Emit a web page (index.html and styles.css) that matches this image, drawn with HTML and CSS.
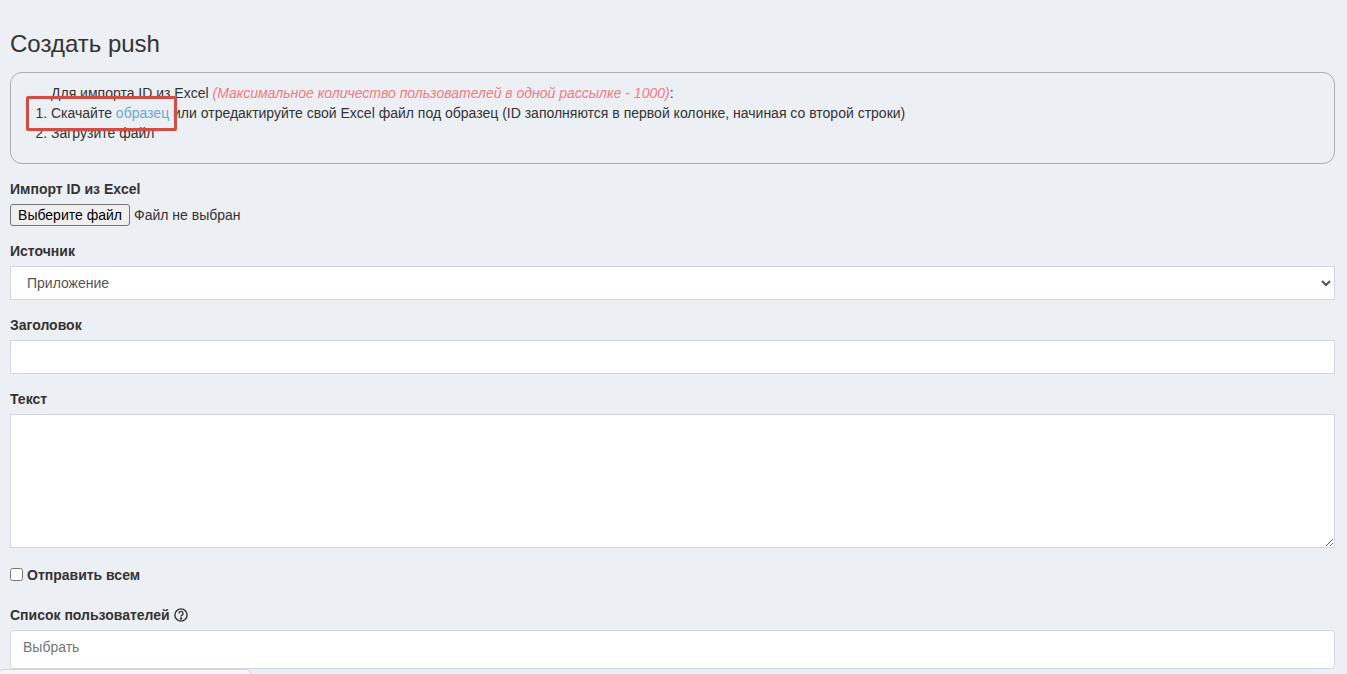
FILE: index.html
```html
<!DOCTYPE html>
<html lang="ru">
<head>
<meta charset="utf-8">
<title>Создать push</title>
<link rel="stylesheet" href="styles.css">
</head>
<body>
<main class="page">
  <h1 class="title">Создать push</h1>
  <section class="note">
    <div class="note-intro">Для импорта ID из Excel <em class="limit">(Максимальное количество пользователей в одной рассылке - 1000)</em>:</div>
    <ol class="note-list">
      <li>Скачайте <a class="link" href="#">образец</a> или отредактируйте свой Excel файл под образец (ID заполняются в первой колонке, начиная со второй строки)</li>
      <li>Загрузите файл</li>
    </ol>
    <div class="highlight"></div>
  </section>
  <form class="form">
    <div class="group">
      <label class="label">Импорт ID из Excel</label>
      <div class="file-row"><button type="button" class="file-btn">Выберите файл</button><span class="file-name">Файл не выбран</span></div>
    </div>
    <div class="group">
      <label class="label">Источник</label>
      <select class="control select"><option>Приложение</option></select>
    </div>
    <div class="group">
      <label class="label">Заголовок</label>
      <input class="control" type="text">
    </div>
    <div class="group">
      <label class="label">Текст</label>
      <textarea class="control area"></textarea>
    </div>
    <label class="check"><input class="check-box" type="checkbox"><span>Отправить всем</span></label>
    <div class="group">
      <label class="label">Список пользователей
        <svg class="help" width="14" height="14" viewBox="0 0 16 16" fill="none" stroke="#333" stroke-width="1.6"><circle cx="8" cy="8" r="7"/><path d="M5.7 6.2a2.3 2.3 0 1 1 3.5 1.9c-.8.5-1.2 1-1.2 1.7"/><circle cx="8" cy="12.1" r=".6" fill="#333"/></svg>
      </label>
      <div class="picker">Выбрать</div>
    </div>
  </form>
</main>
<div class="dock"></div>
</body>
</html>
```

FILE: styles.css
```css
* { box-sizing: border-box; }
html, body { margin: 0; height: 674px; overflow: hidden; }
body {
  background: #eceff3;
  color: #333;
  font: 14px/20px "Liberation Sans", Arial, sans-serif;
}
.page { padding: 31px 12px 0 10px; }
.title {
  margin: 0 0 15px;
  font-size: 24px;
  line-height: 26px;
  font-weight: 400;
}
.note {
  position: relative;
  height: 92px;
  padding: 10px 0 0 40px;
  border: 1px solid #a9adb3;
  border-radius: 12px;
  margin-bottom: 15px;
}
.limit { color: #f27a84; }
.note-list { margin: 0; padding: 0; }
.link { color: #69a9d6; text-decoration: none; }
.highlight {
  position: absolute;
  left: 15px;
  top: 23px;
  width: 151px;
  height: 35px;
  border: 3px solid #d04e43;
  border-radius: 2px;
  box-shadow: 0 0 1px rgba(208, 78, 67, 0.5);
}
.group { margin-bottom: 15px; }
.label { display: block; margin-bottom: 5px; font-weight: 700; }
.file-row { display: flex; align-items: center; height: 22px; }
.file-btn {
  width: 120px;
  height: 22px;
  padding: 0;
  margin-right: 4px;
  background: #efefef;
  border: 1px solid #767676;
  border-radius: 3px;
  color: #000;
  font: 14px "Liberation Sans", Arial, sans-serif;
}
.control {
  display: block;
  width: 100%;
  height: 34px;
  padding: 6px 12px;
  background: #fff;
  border: 1px solid #d2d6de;
  color: #555;
  font: 14px/20px "Liberation Sans", Arial, sans-serif;
}
.area { height: 134px; }
.check {
  display: flex;
  align-items: center;
  height: 20px;
  margin: 17px 0 20px;
  font-weight: 700;
}
.check-box { width: 13px; height: 13px; margin: 0 4px 2px 0; }
.help { vertical-align: -2px; }
.picker {
  height: 39px;
  padding: 6px 12px;
  background: #fff;
  border: 1px solid #d2d6de;
  border-radius: 4px;
  color: #757575;
}
.dock {
  position: fixed;
  left: -2px;
  bottom: -12px;
  width: 253px;
  height: 17px;
  background: #f5f6f8;
  border: 1px solid #d2d6de;
  border-radius: 5px;
}
```
